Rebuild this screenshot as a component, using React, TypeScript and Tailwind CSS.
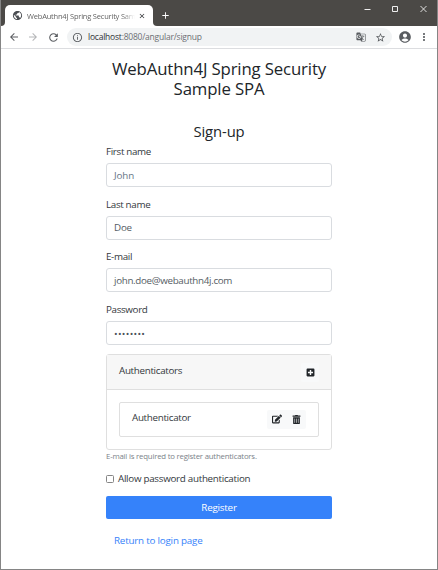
import React from "react";
import {
  MdPublic,
  MdArrowBack,
  MdArrowForward,
  MdRefresh,
  MdInfoOutline,
  MdGTranslate,
  MdStarBorder,
  MdAccountCircle,
  MdMoreVert,
  MdClose,
  MdAdd,
} from "react-icons/md";
import { FaEdit, FaPlusSquare, FaTrashAlt } from "react-icons/fa";

function TabStrip() {
  return (
    <div className="flex h-[26px] items-start bg-[#4b4946]">
      <div className="flex h-[26px] w-[4px] items-end bg-white">
        <div className="h-full w-full rounded-br-[4px] bg-[#4b4946]" />
      </div>
      <div className="flex h-full w-[148px] flex-col bg-[#4b4946] pt-[5px]">
        <div className="flex h-[21px] items-center rounded-t-[5px] bg-white pl-[7px]">
          <MdPublic className="h-[11px] w-[11px] shrink-0 text-[#4a4d51]" />
          <div className="ml-[4px] w-[108px] overflow-hidden whitespace-nowrap bg-gradient-to-r from-[#5a5a5a] from-88% to-transparent bg-clip-text text-[7.5px] leading-[12px] tracking-[-0.2px] text-transparent">
            WebAuthn4J Spring Security Sample SPA
          </div>
          <MdClose className="ml-[3px] h-[8px] w-[8px] shrink-0 text-[#303235]" />
        </div>
      </div>
      <div className="flex h-full w-[5px] bg-white">
        <div className="h-full w-full rounded-bl-[4px] bg-[#4b4946]" />
      </div>
      <MdAdd className="ml-[2px] mt-[10px] h-[11px] w-[11px] text-white" />
      <div className="ml-auto mr-[10px] mt-[5px] flex items-center gap-[21px]">
        <svg className="h-[8px] w-[7px]" viewBox="0 0 7 8">
          <path d="M0.5 4.5h6" stroke="#eee" fill="none" />
        </svg>
        <svg className="h-[8px] w-[7px]" viewBox="0 0 7 8">
          <path d="M0.5 1.5h5v5h-5z" stroke="#eee" fill="none" />
        </svg>
        <svg className="h-[8px] w-[7px]" viewBox="0 0 7 8">
          <path d="M0.5 1l6 6M6.5 1l-6 6" stroke="#eee" strokeWidth="0.9" fill="none" />
        </svg>
      </div>
    </div>
  );
}

function Toolbar() {
  return (
    <div className="flex h-[23px] items-center border-b border-[#dcdde0] bg-white pl-[7px] text-[#5a5d61]">
      <MdArrowBack className="h-[12px] w-[12px]" />
      <MdArrowForward className="ml-[7px] h-[12px] w-[12px] text-[#b4b5b7]" />
      <MdRefresh className="ml-[8px] h-[13px] w-[13px]" />
      <div className="ml-[7px] flex h-[18px] w-[325px] items-center rounded-full bg-[#f1f3f4] pl-[5px] pr-[6px]">
        <MdInfoOutline className="h-[11px] w-[11px]" />
        <div className="ml-[5px] text-[8.5px] leading-[14px] tracking-[-0.22px] text-[#6c6f73]">
          <span className="text-[#303235]">localhost</span>:8080/angular/signup
        </div>
        <MdGTranslate className="ml-auto h-[10px] w-[10px]" />
        <MdStarBorder className="ml-[9px] h-[11px] w-[11px]" />
      </div>
      <MdAccountCircle className="ml-[6px] h-[14px] w-[14px]" />
      <MdMoreVert className="ml-[6px] h-[12px] w-[12px]" />
    </div>
  );
}

function Field({ label, value, className }: { label: string; value: string; className: string }) {
  return (
    <div className="h-[52.7px]">
      <div className="h-[19px] text-[9.8px] leading-[15px] tracking-[-0.33px] text-[#33383d]">{label}</div>
      <div className="flex h-[24px] items-center rounded-[3px] border border-[#d9dce0] px-[7px] pt-[2px]">
        <span className={className}>{value}</span>
      </div>
    </div>
  );
}

export default function App() {
  return (
    <div className="flex h-[570px] w-[438px] flex-col overflow-hidden border border-t-0 border-[#858585] bg-white font-['Open_Sans','Noto_Sans',sans-serif] text-[#212529]">
      <TabStrip />
      <Toolbar />
      <main className="ml-[105px] w-[226px]">
        <h1 className="mt-[10px] whitespace-nowrap text-center text-[16.8px] leading-[20px] tracking-[-0.15px]">
          WebAuthn4J Spring Security
          <br />
          Sample SPA
        </h1>
        <h2 className="mt-[22px] text-center text-[14.8px] leading-[20px] tracking-[-0.1px]">Sign-up</h2>
        <div className="mt-[3px]">
          <Field label="First name" value="John" className="text-[9.8px] tracking-[-0.1px] text-[#667485]" />
          <Field label="Last name" value="Doe" className="text-[9.8px] tracking-[-0.2px] text-[#555c64]" />
          <Field label="E-mail" value="john.doe@webauthn4j.com" className="text-[9.8px] tracking-[-0.32px] text-[#555c64]" />
          <Field label="Password" value="••••••••" className="text-[9.6px] tracking-[0.3px] text-[#495057]" />
        </div>
        <section className="-mt-px h-[96px] rounded-[3px] border border-[#dfdfdf]">
          <header className="flex h-[35px] items-start justify-between border-b border-[#dfdfdf] bg-[#f7f7f7] px-[12px]">
            <span className="mt-[8px] text-[9.8px] leading-[16px] tracking-[-0.3px] text-[#33383d]">Authenticators</span>
            <button className="mt-[8px] flex h-[19px] w-[18px] items-center justify-center rounded-[2px] bg-[#f8f9fa]">
              <FaPlusSquare className="h-[9px] w-[9px]" />
            </button>
          </header>
          <div className="mx-[12px] mt-[12px] flex h-[35px] items-start justify-between rounded-[2px] border border-[#dfdfdf] px-[12px]">
            <span className="mt-[7px] text-[9.8px] leading-[16px] tracking-[-0.3px] text-[#33383d]">Authenticator</span>
            <div className="mt-[7px] flex rounded-[2px] bg-[#f8f9fa]">
              <button className="flex h-[19px] w-[20px] items-center justify-center">
                <FaEdit className="h-[10px] w-[10px]" />
              </button>
              <button className="flex h-[19px] w-[19px] items-center justify-center">
                <FaTrashAlt className="h-[9px] w-[9px]" />
              </button>
            </div>
          </div>
        </section>
        <p className="whitespace-nowrap text-[7.8px] leading-[12px] tracking-[-0.2px] text-[#7b8289]">
          E-mail is required to register authenticators.
        </p>
        <label className="mt-[9px] flex h-[16px] items-center text-[9.8px] tracking-[-0.28px] text-[#33383d]">
          <span className="mr-[4px] h-[8px] w-[8px] rounded-[1.5px] border border-[#858585] bg-white" />
          <span className="pt-px">Allow password authentication</span>
        </label>
        <button className="mt-[9px] h-[23px] w-full rounded-[2px] bg-[#3582fa] text-[9.8px] leading-[23px] tracking-[-0.2px] text-white">
          Register
        </button>
        <a className="mt-[14px] block pl-[8px] text-[9.8px] leading-[16px] tracking-[-0.2px] text-[#3582fa]">
          Return to login page
        </a>
      </main>
    </div>
  );
}
